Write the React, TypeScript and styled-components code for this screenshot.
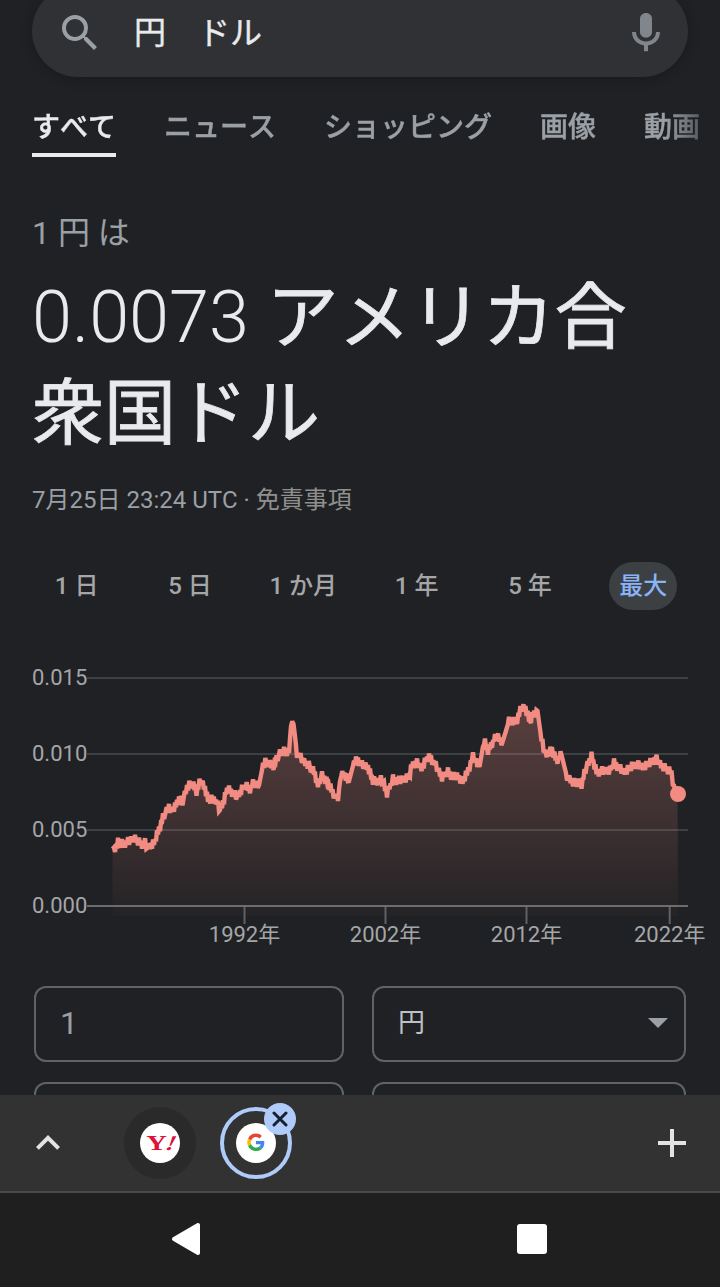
import React from "react";
import styled, { createGlobalStyle, css } from "styled-components";

const GlobalStyle = createGlobalStyle`
  * { box-sizing: border-box; }
  body {
    margin: 0;
    background: #202124;
    font-family: Roboto, "Noto Sans CJK JP", sans-serif;
    font-kerning: none;
  }
`;

const Screen = styled.div`
  width: 720px;
  height: 1287px;
  display: flex;
  flex-direction: column;
  overflow: hidden;
  background: #202124;
`;

const Page = styled.main`
  height: 1095px;
  overflow: hidden;
  display: flex;
  flex-direction: column;
`;

const SearchBar = styled.div`
  flex: none;
  height: 92px;
  margin: -15px 32px 0;
  padding: 3px 18px 0 24px;
  border-radius: 46px;
  background: #303134;
  box-shadow: 0 2px 10px rgba(23, 23, 23, 0.7);
  display: flex;
  align-items: center;
`;

const Query = styled.div`
  flex: 1;
  margin-left: 30px;
  font-size: 32px;
  line-height: 48px;
  color: #e8eaed;
  white-space: pre;
  -webkit-text-stroke: 0.4px #e8eaed;
`;

const Tabs = styled.nav`
  flex: none;
  height: 80px;
  padding-left: 32px;
  display: flex;
  gap: 48px;
  overflow: hidden;
  mask-image: linear-gradient(to right, #000 665px, rgba(0, 0, 0, 0.4) 705px);
`;

const Tab = styled.span<{ $active?: boolean }>`
  flex: none;
  height: 80px;
  padding-top: 31px;
  font-size: 28px;
  font-weight: 500;
  line-height: 40px;
  color: ${(p) => (p.$active ? "#e8eaed" : "#9aa0a6")};
  -webkit-text-stroke: 0.4px currentColor;
  ${(p) =>
    p.$active &&
    css`
      border-bottom: 4px solid #e8eaed;
    `}
`;

const Answer = styled.section`
  flex: none;
  height: 366px;
  padding: 52px 32px 0;
`;

const Caption = styled.div`
  font-size: 32px;
  line-height: 48px;
  color: #9aa0a6;
`;

const Amount = styled.div`
  margin-top: 13px;
  font-size: 72px;
  font-weight: 400;
  line-height: 96px;
  color: #e8eaed;
`;

const AmountLine = styled.div`
  height: 96px;
  white-space: pre;
  -webkit-text-stroke: 0.8px #e8eaed;
`;

const Figure = styled.span`
  font-weight: 300;
  -webkit-text-stroke: 0;
`;

const Stamp = styled.div`
  margin-top: 20px;
  font-size: 24px;
  line-height: 36px;
  color: #9aa0a6;
`;

const Disclaimer = styled.span`
  color: #8f908e;
`;

const Ranges = styled.div`
  flex: none;
  height: 48px;
  margin: 39px 20px 0;
  display: grid;
  grid-template-columns: repeat(6, 1fr);
  justify-items: center;
`;

const Range = styled.span<{ $active?: boolean }>`
  height: 48px;
  padding: 0 10px;
  border-radius: 24px;
  font-size: 24px;
  font-weight: 500;
  line-height: 48px;
  color: ${(p) => (p.$active ? "#8ab4f8" : "#a5a6a8")};
  background: ${(p) => (p.$active ? "#3c4043" : "transparent")};
`;

const ChartSvg = styled.svg`
  flex: none;
  display: block;
  margin-top: 40px;
  font-size: 22px;
`;

const Fields = styled.div`
  flex: none;
  margin-top: 26px;
  padding: 0 34px;
  display: grid;
  grid-template-columns: 310px 314px;
  column-gap: 28px;
  row-gap: 20px;
`;

const Field = styled.div<{ $unit?: boolean }>`
  height: 76px;
  border: 2px solid #5f6368;
  border-radius: 12px;
  padding: 0 16px ${(p) => (p.$unit ? 2 : 3)}px 24px;
  display: flex;
  align-items: center;
  justify-content: space-between;
  font-size: ${(p) => (p.$unit ? 27 : 32)}px;
  line-height: 34px;
  color: ${(p) => (p.$unit ? "#bdc1c6" : "#9aa0a6")};
`;

const Unit = styled.span`
  margin-top: -1px;
`;

const Caret = styled.span`
  border: 10px solid transparent;
  border-top-color: #9aa0a6;
  border-bottom: 0;
`;

const TabStrip = styled.footer`
  flex: none;
  height: 98px;
  padding: 0 24px;
  border-bottom: 2px solid #4a4a4a;
  background: #323232;
  display: flex;
  align-items: center;
`;

const SiteList = styled.div`
  flex: 1;
  margin-left: 52px;
  display: flex;
  gap: 24px;
`;

const Site = styled.div<{ $active?: boolean }>`
  position: relative;
  width: 72px;
  height: 72px;
  border-radius: 50%;
  background: ${(p) => (p.$active ? "transparent" : "#2a2a2a")};
  border: ${(p) => (p.$active ? "4px solid #aecbfa" : "0")};
  display: grid;
  place-items: center;
`;

const Favicon = styled.svg`
  width: 40px;
  height: 40px;
  border-radius: 50%;
  background: #fff;
`;

const CloseBadge = styled.span`
  position: absolute;
  top: -8px;
  right: -8px;
  width: 32px;
  height: 32px;
  border-radius: 50%;
  background: #aecbfa;
  display: grid;
  place-items: center;
`;

const SystemBar = styled.footer`
  flex: 1;
  padding: 0 0 2px 171px;
  background: #1f1f1f;
  display: flex;
  align-items: center;
  gap: 316px;
`;

const HomeSquare = styled.span`
  width: 30px;
  height: 30px;
  border-radius: 3px;
  background: #fff;
`;

/* Price history as [x, y] in chart space, whose top edge is y = 650. */
const HISTORY: number[][] = [
  [112.5, 849], [114, 851], [118, 842], [121, 844], [125, 843], [128, 842], [131, 840], [134, 838],
  [137, 841], [142, 844], [145, 843], [147.5, 848], [151, 845], [154, 843], [158, 832], [163, 818],
  [169, 806], [171, 811], [175, 807], [179, 798], [182.5, 802], [187, 787], [191.5, 783], [196.5, 791],
  [200.5, 781], [205, 788], [208, 800], [215, 799], [220, 810], [224, 800], [227, 789], [232, 792],
  [237, 797], [242, 789], [245.5, 785], [249, 790], [253, 784], [259, 785], [263, 765], [266.5, 761],
  [272.5, 767], [276.5, 760], [280, 753], [284, 751], [289, 753], [291, 724], [293.5, 724], [297, 753],
  [303, 761], [310, 766], [315, 774], [318, 786], [322, 775], [326.5, 781], [331.5, 790], [338, 801],
  [340, 778], [343.5, 773], [349, 781], [354, 762], [358, 760], [362, 765], [368, 767], [373, 781],
  [382, 780], [387, 793], [393, 779], [398, 781], [409, 777], [412, 765], [416, 762], [421.5, 768],
  [427, 758], [431, 758], [437, 768], [442, 777], [448, 772], [453, 777], [458, 776], [462.5, 782],
  [467, 773], [473, 757], [479.5, 767], [484, 740], [488, 751], [492, 743], [497, 736], [502.5, 742],
  [509, 721], [516, 722], [521.5, 708], [525.5, 708], [530, 722], [533, 714], [537.5, 711], [541.5, 740],
  [545.5, 755], [551.5, 750], [556.5, 760], [561.5, 755], [567, 777], [573, 782], [581.5, 784],
  [586.5, 767], [591.5, 756], [596.5, 772], [610, 770], [614, 763], [623.5, 772], [630, 768],
  [635, 764], [643, 767], [651.5, 762], [655.5, 758], [660, 764], [671.5, 773], [674, 787], [677.5, 794],
];

const WOBBLE = [0, -3.6, 3.2, -2.1, 4.4, -4.2, 1.8, -1.2, 3.8, -4.6, 2.4, -2.6, 4.8, -1.6, 1.2, -4.8, 3.4];

const buildLine = () => {
  const out: string[] = [];
  let k = 0;
  for (let i = 0; i < HISTORY.length - 1; i++) {
    const [x0, y0] = HISTORY[i];
    const [x1, y1] = HISTORY[i + 1];
    const steps = Math.max(1, Math.round((x1 - x0) / 1.1));
    for (let s = 0; s < steps; s++) {
      const t = s / steps;
      const w = Math.abs(y1 - y0) > 18 ? 0 : WOBBLE[k++ % WOBBLE.length];
      out.push(`${(x0 + (x1 - x0) * t).toFixed(1)},${(y0 + (y1 - y0) * t + w - 650).toFixed(1)}`);
    }
  }
  out.push("677.5,144");
  return out.join(" ");
};

const LINE = buildLine();

const Y_AXIS = [
  { label: "0.015", y: 28 },
  { label: "0.010", y: 104 },
  { label: "0.005", y: 180 },
  { label: "0.000", y: 256 },
];

const X_AXIS = [
  { label: "1992年", x: 244.5 },
  { label: "2002年", x: 385.5 },
  { label: "2012年", x: 526.5 },
  { label: "2022年", x: 669.7 },
];

const HistoryChart = () => (
  <ChartSvg width="720" height="310" viewBox="0 0 720 310">
    <defs>
      <linearGradient id="area" x1="0" y1="58" x2="0" y2="266" gradientUnits="userSpaceOnUse">
        <stop offset="0" stopColor="#f28b82" stopOpacity="0.28" />
        <stop offset="1" stopColor="#f28b82" stopOpacity="0.02" />
      </linearGradient>
    </defs>
    {Y_AXIS.map(({ label, y }) => (
      <g key={label}>
        <rect x="87" y={y - 1} width="601" height="2" fill={y === 256 ? "#6a6b6b" : "#3c4043"} />
        <text x="32" y={y + 7} fill="#a5a6a8">
          {label}
        </text>
      </g>
    ))}
    <polygon points={`112.5,266 ${LINE} 678,266`} fill="url(#area)" />
    <polyline
      points={LINE}
      fill="none"
      stroke="#f28b82"
      strokeWidth="4.4"
      strokeLinejoin="miter"
      strokeMiterlimit="2.6"
    />
    <circle cx="678" cy="144" r="8" fill="#f28b82" />
    {X_AXIS.map(({ label, x }) => (
      <g key={label}>
        <rect x={x - 1} y="257" width="2" height="17" fill="#5f6163" />
        <text x={x} y="292" textAnchor="middle" fill="#a5a6a8">
          {label}
        </text>
      </g>
    ))}
  </ChartSvg>
);

const SearchIcon = () => (
  <svg width="48" height="48" viewBox="0 0 24 24" fill="#9aa0a6">
    <path d="M15.5 14h-.79l-.28-.27A6.471 6.471 0 0 0 16 9.5 6.5 6.5 0 1 0 9.5 16c1.61 0 3.09-.59 4.23-1.57l.27.28v.79l5 4.99L20.49 19l-4.99-5zm-6 0C7.01 14 5 11.99 5 9.5S7.01 5 9.5 5 14 7.01 14 9.5 11.99 14 9.5 14z" />
  </svg>
);

const MicIcon = () => (
  <svg width="48" height="46" viewBox="0 0.5 24 24" preserveAspectRatio="none" fill="#80868b">
    <path d="M12 15c1.66 0 3-1.31 3-2.97V5.01C15 3.35 13.66 2 12 2S9 3.34 9 5.01v7.02C9 13.69 10.34 15 12 15z" />
    <path d="M11 18.08h2V22h-2z" />
    <path d="M12 16.93c-2.76 0-5-2.01-5-4.93H5c0 4.08 3.13 7 7 7s6.99-2.92 6.99-7H17c0 2.92-2.24 4.93-5 4.93z" />
  </svg>
);

const App = () => (
  <>
    <GlobalStyle />
    <Screen>
      <Page>
        <SearchBar>
          <SearchIcon />
          <Query>円　ドル</Query>
          <MicIcon />
        </SearchBar>
        <Tabs>
          <Tab $active>すべて</Tab>
          <Tab>ニュース</Tab>
          <Tab>ショッピング</Tab>
          <Tab>画像</Tab>
          <Tab>動画</Tab>
        </Tabs>
        <Answer>
          <Caption>1 円 は</Caption>
          <Amount>
            <AmountLine>
              <Figure>0.0073 </Figure>アメリカ合
            </AmountLine>
            <AmountLine>衆国ドル</AmountLine>
          </Amount>
          <Stamp>
            7月25日 23:24 UTC · <Disclaimer>免責事項</Disclaimer>
          </Stamp>
        </Answer>
        <Ranges>
          <Range>1 日</Range>
          <Range>5 日</Range>
          <Range>1 か月</Range>
          <Range>1 年</Range>
          <Range>5 年</Range>
          <Range $active>最大</Range>
        </Ranges>
        <HistoryChart />
        <Fields>
          <Field>1</Field>
          <Field $unit>
            <Unit>円</Unit>
            <Caret />
          </Field>
          <Field />
          <Field $unit />
        </Fields>
      </Page>
      <TabStrip>
        <svg width="48" height="48" viewBox="0 0 24 24" fill="#e3e3e3">
          <path d="M12 8l-6 6 1.41 1.41L12 10.83l4.59 4.58L18 14z" />
        </svg>
        <SiteList>
          <Site>
            <Favicon viewBox="0 0 40 40">
              <g fill="#e0103a" fontFamily="Liberation Serif, serif" fontWeight="700">
                <text x="0" y="0" fontSize="22" transform="translate(6.3 27.3) scale(1.3 1)">
                  Y
                </text>
                <text x="0" y="0" fontSize="21" transform="translate(24 27.3) skewX(-24) scale(1.25 1)">
                  !
                </text>
              </g>
            </Favicon>
          </Site>
          <Site $active>
            <Favicon viewBox="0 0 40 40">
              <g transform="translate(11.2 10.6) scale(0.365)">
                <path fill="#EA4335" d="M24 9.5c3.54 0 6.71 1.22 9.21 3.6l6.85-6.85C35.9 2.38 30.47 0 24 0 14.62 0 6.51 5.38 2.56 13.22l7.98 6.19C12.43 13.72 17.74 9.5 24 9.5z" />
                <path fill="#4285F4" d="M46.98 24.55c0-1.57-.15-3.09-.38-4.55H24v9.02h12.94c-.58 2.96-2.26 5.48-4.78 7.18l7.73 6c4.51-4.18 7.09-10.36 7.09-17.65z" />
                <path fill="#FBBC05" d="M10.53 28.59c-.48-1.45-.76-2.99-.76-4.59s.27-3.14.76-4.59l-7.98-6.19C.92 16.46 0 20.12 0 24c0 3.88.92 7.54 2.56 10.78l7.97-6.19z" />
                <path fill="#34A853" d="M24 48c6.48 0 11.93-2.13 15.89-5.81l-7.73-6c-2.15 1.45-4.92 2.3-8.16 2.3-6.26 0-11.57-4.22-13.47-9.91l-7.98 6.19C6.51 42.62 14.62 48 24 48z" />
              </g>
            </Favicon>
            <CloseBadge>
              <svg width="16" height="16" viewBox="0 0 16 16" stroke="#17202e" strokeWidth="3" strokeLinecap="round">
                <path d="M2 2l12 12M14 2L2 14" />
              </svg>
            </CloseBadge>
          </Site>
        </SiteList>
        <svg width="48" height="48" viewBox="0 0 24 24" fill="#e3e3e3">
          <path d="M19 13h-6v6h-2v-6H5v-2h6V5h2v6h6z" />
        </svg>
      </TabStrip>
      <SystemBar>
        <svg width="30" height="34" viewBox="0 0 30 34">
          <path d="M3 17L27 3v28z" fill="#fff" stroke="#fff" strokeWidth="4" strokeLinejoin="round" />
        </svg>
        <HomeSquare />
      </SystemBar>
    </Screen>
  </>
);

export default App;
